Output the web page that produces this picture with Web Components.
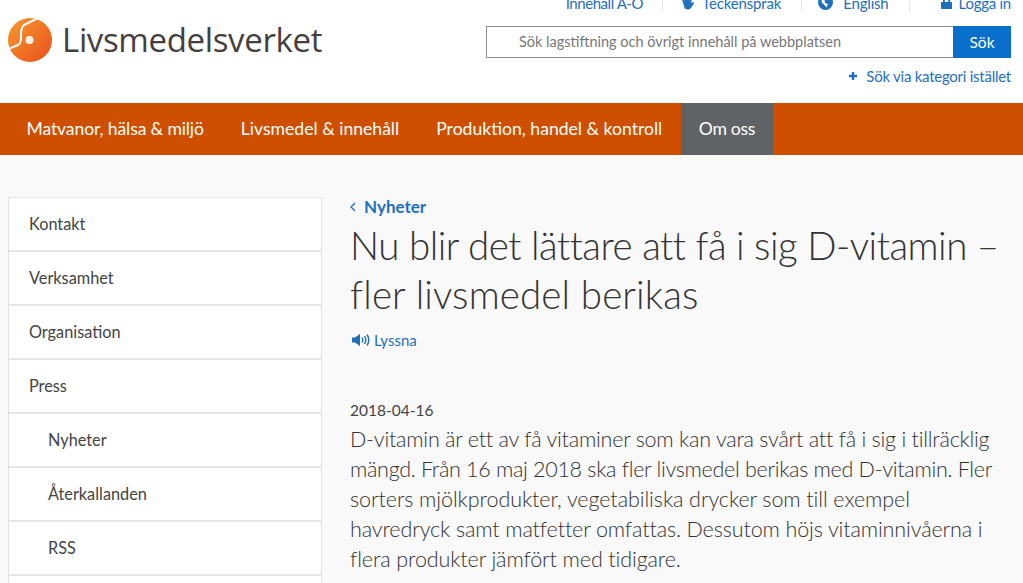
<!DOCTYPE html>
<html lang="sv">
<head>
<meta charset="utf-8">
<title>Livsmedelsverket</title>
<style>
  html, body { margin: 0; height: 583px; overflow: hidden; background: #f9f9f9; font-family: "Lato", "Liberation Sans", sans-serif; }
</style>
</head>
<body>
<lv-header></lv-header>
<lv-nav>
  <lv-nav-item style="letter-spacing:-0.130px">Matvanor, hälsa &amp; miljö</lv-nav-item>
  <lv-nav-item>Livsmedel &amp; innehåll</lv-nav-item>
  <lv-nav-item>Produktion, handel &amp; kontroll</lv-nav-item>
  <lv-nav-item active style="letter-spacing:-0.300px">Om oss</lv-nav-item>
</lv-nav>
<lv-main>
  <lv-side slot="side">
    <lv-side-item>Kontakt</lv-side-item>
    <lv-side-item>Verksamhet</lv-side-item>
    <lv-side-item>Organisation</lv-side-item>
    <lv-side-item>Press</lv-side-item>
    <lv-side-item sub>Nyheter</lv-side-item>
    <lv-side-item sub>Återkallanden</lv-side-item>
    <lv-side-item sub>RSS</lv-side-item>
    <lv-side-item sub></lv-side-item>
  </lv-side>
  <lv-article></lv-article>
</lv-main>
<script>
class LvHeader extends HTMLElement {
  constructor() {
    super();
    this.attachShadow({ mode: "open" }).innerHTML = `
      <style>
        :host { display: flex; justify-content: space-between; height: 103px; background: #fff; overflow: hidden; box-sizing: border-box; padding: 0 12px 0 8px; }
        .logo { display: flex; align-items: center; gap: 10px; height: 44px; margin-top: 18px; }
        .name { padding-bottom: 2px; font: 33px/1 "Open Sans", sans-serif; color: #453f40; letter-spacing: -0.35px; }
        .tools { display: flex; flex-direction: column; align-items: flex-end; }
        .links { display: flex; height: 20px; margin-top: -6px; font-size: 15px; line-height: 20px; color: #1f6fbd; }
        .links span { display: flex; align-items: center; height: 17px; }
        .links span + span { border-left: 1px solid #e6e6e6; }
        .search { display: flex; width: 525px; height: 32px; margin-top: 12px; box-sizing: border-box; border: 1px solid #8c8c8c; background: #fff; }
        .field { flex: 1; padding-left: 32px; font-size: 14.500px; line-height: 30px; color: #777; }
        .btn { width: 58px; margin: -1px -1px -1px 0; background: #0a6ecb; color: #fff; font-size: 15.500px; line-height: 32px; text-align: center; }
        .cat { display: flex; align-items: center; gap: 8px; margin-top: 8px; font-size: 15px; letter-spacing: -0.250px; line-height: 20px; color: #1f6fbd; }
        svg { display: block; fill: #1f6fbd; }
      </style>
      <div class="logo">
        <svg width="44" height="44" viewBox="0 0 44 44" style="fill:none">
          <defs><linearGradient id="g" x1="0" y1="0" x2="1" y2="1"><stop offset="0" stop-color="#f8992f"/><stop offset="1" stop-color="#e9501c"/></linearGradient></defs>
          <circle cx="22" cy="22" r="22" fill="url(#g)"/>
          <path d="M0 31 L10 27 C13 25.500 13 22 13 16 C13 9 15 7 19 5.500 L30 0" stroke="#fff" stroke-width="2" fill="none"/>
          <circle cx="21.500" cy="22" r="4" fill="#fdf0e6"/>
        </svg>
        <span class="name">Livsmedelsverket</span>
      </div>
      <div class="tools">
        <div class="links">
          <span style="padding-right:19px;letter-spacing:-0.450px">Innehåll A-Ö</span>
          <span style="padding:0 20px 0 18px;letter-spacing:-0.150px"><svg width="14" height="15" viewBox="0 0 14 15" style="margin-right:7px"><path d="M2 7.500 .5 3.500l1.400-.6 2 3L3.500 1.500H5l.8 3.800L6.700.8h1.500l-.2 5L10 2.800l1.200.7L9.800 8l2.200-1 1.100 1-3.300 5.200c-1.700 2-5.900 1.600-6.500-1z"/></svg>Teckenspråk</span>
          <span style="padding:0 20px 0 16px;letter-spacing:-0.200px"><svg width="15" height="15" viewBox="0 0 15 15" style="margin-right:10px"><path fill-rule="evenodd" d="M7.500 0a7.500 7.500 0 1 0 0 15 7.500 7.500 0 0 0 0-15zM3.500 4l3-2.300 3 1-1 2-2 .5.500 2.800 3 1-1.500 3.500L6 9.500 3.800 7.500z"/></svg>English</span>
          <span style="padding-left:31px;letter-spacing:-0.250px"><svg width="11" height="14" viewBox="0 0 11 14" style="margin-right:7px"><path fill-rule="evenodd" d="M2 6V4a3.500 3.500 0 0 1 7 0v2h2v7H0V6zm1.800 0h3.400V4a1.700 1.700 0 0 0-3.400 0z"/></svg>Logga in</span>
        </div>
        <div class="search">
          <div class="field">Sök lagstiftning och övrigt innehåll på webbplatsen</div>
          <div class="btn">Sök</div>
        </div>
        <div class="cat">
          <svg width="10" height="10" viewBox="0 0 10 10"><path d="M3.800 1h2.400v2.800H9v2.400H6.200V9H3.800V6.200H1V3.800h2.800z"/></svg>
          Sök via kategori istället
        </div>
      </div>`;
  }
}
customElements.define("lv-header", LvHeader);

class LvNav extends HTMLElement {
  constructor() {
    super();
    this.attachShadow({ mode: "open" }).innerHTML = `
      <style>
        :host { display: flex; height: 52px; padding-left: 8px; background: #cf4f00; }
      </style>
      <slot></slot>`;
  }
}
customElements.define("lv-nav", LvNav);

class LvNavItem extends HTMLElement {
  constructor() {
    super();
    this.attachShadow({ mode: "open" }).innerHTML = `
      <style>
        :host { display: block; padding: 0 18.500px; font-size: 17.600px; line-height: 52px; color: #fff; white-space: nowrap; }
        :host([active]) { padding: 0 18px; background: #5f6366; }
      </style>
      <slot></slot>`;
  }
}
customElements.define("lv-nav-item", LvNavItem);

class LvMain extends HTMLElement {
  constructor() {
    super();
    this.attachShadow({ mode: "open" }).innerHTML = `
      <style>
        :host { display: grid; grid-template-columns: 314px 1fr; column-gap: 28px; padding: 42px 8px 0; }
      </style>
      <slot name="side"></slot>
      <slot></slot>`;
  }
}
customElements.define("lv-main", LvMain);

class LvSide extends HTMLElement {
  constructor() {
    super();
    this.attachShadow({ mode: "open" }).innerHTML = `
      <style>
        :host { display: block; background: #fff; border: 1px solid #e2e2e2; border-bottom: 0; }
      </style>
      <slot></slot>`;
  }
}
customElements.define("lv-side", LvSide);

class LvSideItem extends HTMLElement {
  constructor() {
    super();
    this.attachShadow({ mode: "open" }).innerHTML = `
      <style>
        :host { display: block; height: 54px; box-sizing: border-box; padding-left: 20px; border-bottom: 2px solid #e6e6e6; font-size: 16.300px; line-height: 52px; color: #444; }
        :host([sub]) { padding-left: 39px; }
      </style>
      <slot></slot>`;
  }
}
customElements.define("lv-side-item", LvSideItem);

class LvArticle extends HTMLElement {
  constructor() {
    super();
    this.attachShadow({ mode: "open" }).innerHTML = `
      <style>
        :host { display: block; color: #3a3a3a; white-space: nowrap; }
        .back { display: flex; align-items: center; gap: 8px; font-size: 17px; font-weight: 700; line-height: 20px; color: #1f6fbd; }
        h1 { margin: 4px 0 0; font-size: 38.500px; font-weight: 300; line-height: 49px; color: #333; }
        h1 span { display: block; }
        .listen { display: flex; align-items: center; gap: 4px; margin-top: 11px; padding-left: 2px; font-size: 15px; line-height: 20px; color: #1f6fbd; }
        .date { margin-top: 50px; font-size: 15.500px; font-weight: 400; line-height: 20px; color: #444; }
        p { margin: 4px 0 0; font-size: 21.500px; font-weight: 300; line-height: 30px; color: #333; }
        p span { display: block; }
        svg { display: block; }
      </style>
      <div class="back">
        <svg width="6" height="10" viewBox="0 0 6 10"><path d="M5 1 1 5l4 4" fill="none" stroke="#1f6fbd" stroke-width="1.300"/></svg>
        Nyheter
      </div>
      <h1><span style="letter-spacing:-0.480px">Nu blir det lättare att få i sig D-vitamin –</span><span style="letter-spacing:0.140px">fler livsmedel berikas</span></h1>
      <div class="listen">
        <svg width="18" height="14" viewBox="0 0 18 14"><path d="M0 4.500h3L8 1v12L3 9.500H0z" fill="#1f6fbd"/><path d="M10 4.500q1.500 2.500 0 5M12.500 3q2.500 4 0 8M15 1.500q3.500 5.500 0 11" fill="none" stroke="#1f6fbd" stroke-width="1.400"/></svg>
        Lyssna
      </div>
      <div class="date">2018-04-16</div>
      <p>
        <span style="letter-spacing:-0.230px">D-vitamin är ett av få vitaminer som kan vara svårt att få i sig i tillräcklig</span>
        <span style="letter-spacing:-0.300px">mängd. Från 16 maj 2018 ska fler livsmedel berikas med D-vitamin. Fler</span>
        <span style="letter-spacing:-0.080px">sorters mjölkprodukter, vegetabiliska drycker som till exempel</span>
        <span style="letter-spacing:-0.120px">havredryck samt matfetter omfattas. Dessutom höjs vitaminnivåerna i</span>
        <span style="letter-spacing:-0.110px">flera produkter jämfört med tidigare.</span>
      </p>`;
  }
}
customElements.define("lv-article", LvArticle);
</script>
</body>
</html>
